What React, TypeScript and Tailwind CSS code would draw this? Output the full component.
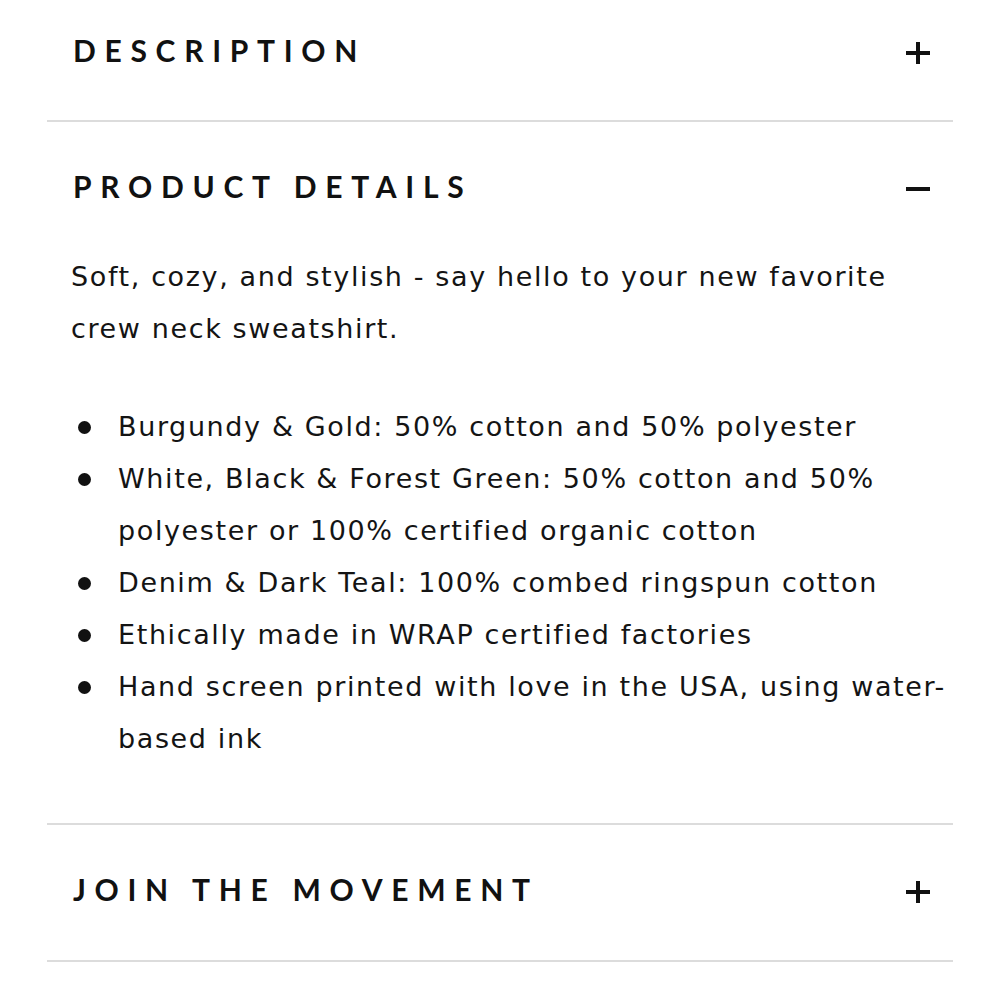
import React from "react";

const bullets = [
  "Burgundy & Gold: 50% cotton and 50% polyester",
  "White, Black & Forest Green: 50% cotton and 50% polyester or 100% certified organic cotton",
  "Denim & Dark Teal: 100% combed ringspun cotton",
  "Ethically made in WRAP certified factories",
  "Hand screen printed with love in the USA, using water-based ink",
];

function ToggleIcon({ open }: { open: boolean }) {
  return (
    <svg width="24" height="24" viewBox="0 0 24 24" className="mt-[11px] shrink-0">
      <rect x="0" y="10" width="24" height="4" fill="#111" />
      {!open && <rect x="10" y="1" width="4" height="22" fill="#111" />}
    </svg>
  );
}

function SectionHeading({ title, open }: { title: string; open: boolean }) {
  return (
    <div className="flex items-start justify-between pl-[26px] pr-[23px]">
      <h2 className="font-['Lato',sans-serif] text-[30px] font-bold leading-[40px] tracking-[0.29em] text-[#111]">
        {title}
      </h2>
      <ToggleIcon open={open} />
    </div>
  );
}

export default function App() {
  return (
    <div className="min-h-[1000px] bg-white px-[47px] font-['DejaVu_Sans',sans-serif] text-[#141414]">
      <section className="pt-[30px] pb-[50px]">
        <SectionHeading title="DESCRIPTION" open={false} />
      </section>
      <div className="h-[2px] bg-[#dcdcdc]" />

      <section className="pt-[44px] pb-[58px]">
        <SectionHeading title="PRODUCT DETAILS" open={true} />
        <div className="mt-[45px] pl-[24px] pr-[4px] text-[27px] leading-[52px] tracking-[0.06em]">
          <p>
            Soft, cozy, and stylish - say hello to your new favorite crew neck
            sweatshirt.
          </p>
          <ul className="mt-[46px]">
            {bullets.map((b) => (
              <li key={b} className="flex">
                <span className="flex h-[52px] w-[47px] shrink-0 items-center pl-[7px]">
                  <span className="h-[13px] w-[13px] rounded-full bg-[#111]" />
                </span>
                <span>{b}</span>
              </li>
            ))}
          </ul>
        </div>
      </section>
      <div className="h-[2px] bg-[#dcdcdc]" />

      <section className="pt-[44px] pb-[51px]">
        <SectionHeading title="JOIN THE MOVEMENT" open={false} />
      </section>
      <div className="h-[2px] bg-[#dcdcdc]" />
    </div>
  );
}
